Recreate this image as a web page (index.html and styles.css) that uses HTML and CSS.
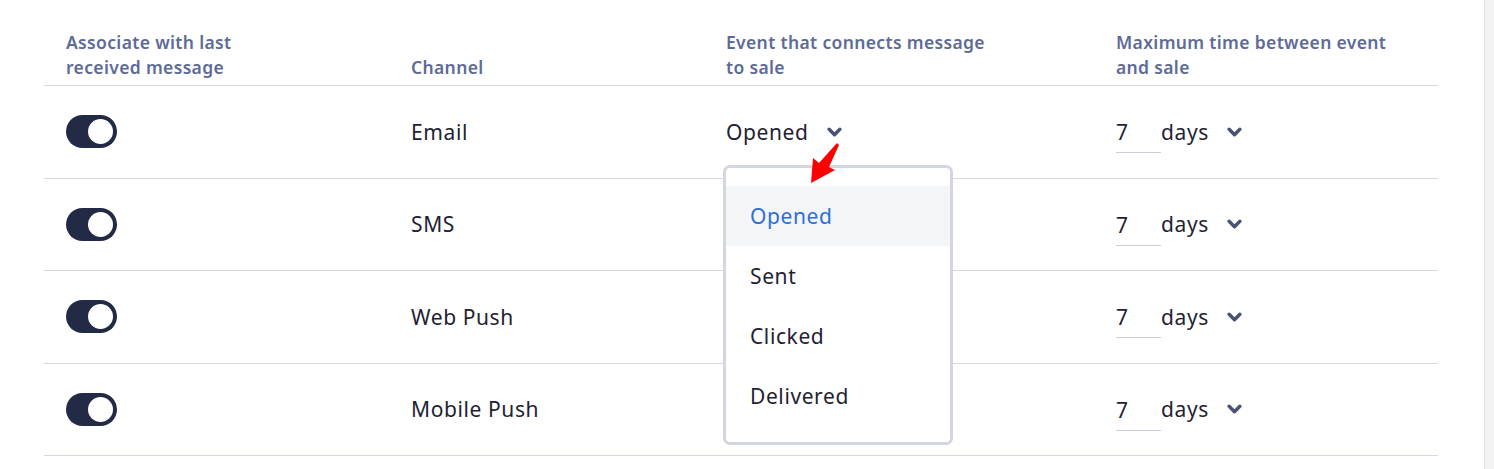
FILE: index.html
```html
<!DOCTYPE html>
<html lang="en">
<head>
  <meta charset="UTF-8" />
  <meta name="viewport" content="width=device-width, initial-scale=1.0"/>
  <title>Attribution settings</title>
  <link rel="stylesheet" href="styles.css">
</head>
<body>
  <div class="page">
    <main class="content">
      <table class="rules">
        <colgroup>
          <col class="col-toggle">
          <col class="col-channel">
          <col class="col-event">
          <col class="col-time">
        </colgroup>
        <thead>
          <tr>
            <th>Associate with last<br>received message</th>
            <th>Channel</th>
            <th>Event that connects message<br>to sale</th>
            <th>Maximum time between event<br>and sale</th>
          </tr>
        </thead>
        <tbody>
          <tr>
            <td><span class="toggle on"></span></td>
            <td>Email</td>
            <td>
              <div class="event-cell">
                <button class="select">Opened <svg class="chevron" viewBox="0 0 14 9"><path d="M2 2 L7 7 L12 2"/></svg></button>

                <svg class="pointer" viewBox="0 0 36 48">
                  <path d="M31 3 L33 5 L23 27 L29 30 L5 43 L7 18 L13 23 Z"/>
                </svg>

                <ul class="dropdown">
                  <li class="active">Opened</li>
                  <li>Sent</li>
                  <li>Clicked</li>
                  <li>Delivered</li>
                </ul>
              </div>
            </td>
            <td>
              <div class="time">
                <span class="amount">7</span>
                <button class="select">days <svg class="chevron" viewBox="0 0 14 9"><path d="M2 2 L7 7 L12 2"/></svg></button>
              </div>
            </td>
          </tr>
          <tr>
            <td><span class="toggle on"></span></td>
            <td>SMS</td>
            <td></td>
            <td>
              <div class="time">
                <span class="amount">7</span>
                <button class="select">days <svg class="chevron" viewBox="0 0 14 9"><path d="M2 2 L7 7 L12 2"/></svg></button>
              </div>
            </td>
          </tr>
          <tr>
            <td><span class="toggle on"></span></td>
            <td>Web Push</td>
            <td></td>
            <td>
              <div class="time">
                <span class="amount">7</span>
                <button class="select">days <svg class="chevron" viewBox="0 0 14 9"><path d="M2 2 L7 7 L12 2"/></svg></button>
              </div>
            </td>
          </tr>
          <tr>
            <td><span class="toggle on"></span></td>
            <td>Mobile Push</td>
            <td></td>
            <td>
              <div class="time">
                <span class="amount">7</span>
                <button class="select">days <svg class="chevron" viewBox="0 0 14 9"><path d="M2 2 L7 7 L12 2"/></svg></button>
              </div>
            </td>
          </tr>
        </tbody>
      </table>
    </main>
    <aside class="side-strip"></aside>
  </div>
</body>
</html>
```

FILE: styles.css
```css
* {
  margin: 0;
  padding: 0;
  box-sizing: border-box;
  font-family: "Noto Sans", "Open Sans", sans-serif;
}

body {
  background-color: #fff;
  color: #1f2233;
  overflow: hidden;
}

.page {
  display: flex;
  height: 469px;
}

.content {
  flex: 1;
  padding: 0 46px 0 44px;
}

.side-strip {
  width: 10px;
  background-color: #f3f3f4;
  border-left: 1px solid #dcdde4;
}

.rules {
  width: 1394px;
  border-collapse: collapse;
  table-layout: fixed;
}

.col-toggle { width: 345px; }
.col-channel { width: 315px; }
.col-event { width: 390px; }
.col-time { width: 344px; }

th {
  text-align: left;
  vertical-align: bottom;
  font-size: 17.5px;
  font-weight: 600;
  letter-spacing: 0.35px;
  line-height: 25px;
  color: #5e6b96;
  padding: 30px 22px 5px;
  border-bottom: 1px solid #d6d8e1;
}

td {
  height: 92.5px;
  padding: 0 22px;
  font-size: 21px;
  letter-spacing: 0.6px;
  vertical-align: middle;
  border-bottom: 1px solid #d6d8e1;
}

/* toggle */
.toggle {
  display: block;
  width: 51px;
  height: 33px;
  border-radius: 17px;
  background-color: #222a45;
  position: relative;
}

.toggle::after {
  content: "";
  position: absolute;
  top: 4px;
  right: 4px;
  width: 25px;
  height: 25px;
  border-radius: 50%;
  background-color: #fff;
}

/* selects */
.select {
  display: inline-flex;
  align-items: center;
  gap: 18px;
  background: none;
  border: none;
  font-size: 21px;
  letter-spacing: 0.6px;
  color: #1f2233;
  cursor: pointer;
}

.chevron {
  width: 15px;
  height: 10px;
  fill: none;
  stroke: #4a5275;
  stroke-width: 3.2;
  stroke-linecap: round;
  stroke-linejoin: round;
}

.event-cell {
  position: relative;
}

.pointer {
  position: absolute;
  left: 80px;
  top: 22px;
  width: 36px;
  height: 48px;
  fill: #ff0000;
  z-index: 3;
}

.dropdown {
  position: absolute;
  top: 47px;
  left: -3px;
  width: 230px;
  height: 280px;
  list-style: none;
  background-color: #fff;
  border: 3px solid #d3d6e1;
  border-radius: 7px;
  padding: 18px 0 0;
  z-index: 2;
}

.dropdown li {
  height: 60px;
  line-height: 60px;
  padding-left: 24px;
  font-size: 21px;
  color: #1f2233;
}

.dropdown li.active {
  background-color: #f4f5f7;
  color: #2d6fd6;
}

/* time */
.time {
  display: flex;
  align-items: center;
}

.amount {
  width: 45px;
  line-height: 40px;
  border-bottom: 1px solid #c9cde0;
  margin-top: 2px;
}
```
